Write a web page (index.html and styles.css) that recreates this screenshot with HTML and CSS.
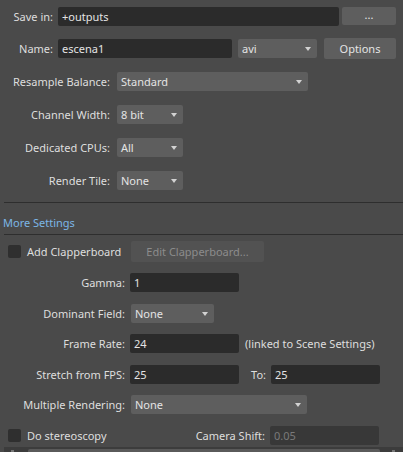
FILE: index.html
```html
<!DOCTYPE html>
<html>
<head>
<meta charset="utf-8">
<link rel="stylesheet" href="styles.css">
</head>
<body>
<div class="panel">
  <div class="top">
    <div class="row first">
      <span class="lbl lbl-s">Save in:</span>
      <div class="field w-save">+outputs</div>
      <div class="btn btn-dots">...</div>
    </div>
    <div class="row">
      <span class="lbl lbl-s">Name:</span>
      <div class="field w-name">escena1</div>
      <div class="combo w-avi">avi<span class="arrow"></span></div>
      <div class="btn btn-opt">Options</div>
    </div>
    <div class="row">
      <span class="lbl lbl-m">Resample Balance:</span>
      <div class="combo w-resample">Standard<span class="arrow"></span></div>
    </div>
    <div class="row">
      <span class="lbl lbl-m">Channel Width:</span>
      <div class="combo w-small">8 bit<span class="arrow"></span></div>
    </div>
    <div class="row">
      <span class="lbl lbl-m">Dedicated CPUs:</span>
      <div class="combo w-small">All<span class="arrow"></span></div>
    </div>
    <div class="row">
      <span class="lbl lbl-m">Render Tile:</span>
      <div class="combo w-small">None<span class="arrow"></span></div>
    </div>
  </div>
  <div class="sep sep-a"></div>
  <div class="section-title">More Settings</div>
  <div class="sep"></div>
  <div class="lower">
    <div class="row h31 check-row">
      <div class="check-group">
        <span class="check"></span><span class="check-lbl">Add Clapperboard</span>
      </div>
      <div class="btn btn-edit disabled">Edit Clapperboard...</div>
    </div>
    <div class="row h31">
      <span class="lbl lbl-l">Gamma:</span>
      <div class="field w-num">1</div>
    </div>
    <div class="row h30">
      <span class="lbl lbl-l">Dominant Field:</span>
      <div class="combo c-l w-dom">None<span class="arrow"></span></div>
    </div>
    <div class="row h31">
      <span class="lbl lbl-l">Frame Rate:</span>
      <div class="field w-num">24</div>
      <span class="note">(linked to Scene Settings)</span>
    </div>
    <div class="row h30">
      <span class="lbl lbl-l">Stretch from FPS:</span>
      <div class="field w-num">25</div>
      <span class="lbl lbl-to">To:</span>
      <div class="field w-num">25</div>
    </div>
    <div class="row h31">
      <span class="lbl lbl-l">Multiple Rendering:</span>
      <div class="combo c-l w-multi">None<span class="arrow"></span></div>
    </div>
    <div class="row stereo-row">
      <div class="check-group">
        <span class="check"></span><span class="check-lbl">Do stereoscopy</span>
      </div>
      <span class="lbl cam-lbl">Camera Shift:</span>
      <div class="field w-num field-dis">0.05</div>
    </div>
  </div>
  <div class="bottom-strip">
    <span class="tick tick-l"></span>
    <div class="bar"></div>
    <span class="tick tick-r"></span>
  </div>
</div>
</body>
</html>
```

FILE: styles.css
```css
html, body {
  margin: 0;
  padding: 0;
  background: #4a4a4a;
}
body {
  width: 403px;
  height: 452px;
  overflow: hidden;
  font-family: "Noto Sans", "Open Sans", sans-serif;
  font-size: 11px;
  color: #dedede;
}
.panel {
  display: flex;
  flex-direction: column;
}
.row {
  display: flex;
  align-items: center;
  height: 33px;
}
.row.first {
  height: 32px;
}
.lbl {
  flex: 0 0 auto;
  text-align: right;
  white-space: nowrap;
  box-sizing: border-box;
}
.lbl-s { width: 53px; margin-right: 5px; }
.lbl-m { width: 110px; margin-right: 7px; }
.lbl-l { width: 125px; margin-right: 5px; }
.lbl-to { width: 27px; margin-right: 5px; }
.field {
  box-sizing: border-box;
  height: 19px;
  line-height: 19px;
  background: #2b2b2b;
  border-radius: 2px;
  padding-left: 4px;
  color: #e4e4e4;
  white-space: nowrap;
}
.field-dis {
  background: #383838;
  color: #7a7a7a;
}
.combo {
  position: relative;
  box-sizing: border-box;
  height: 19px;
  line-height: 19px;
  background: #5e5e5e;
  border-radius: 2px;
  padding-left: 4px;
  color: #e4e4e4;
  white-space: nowrap;
}
.c-l { margin-left: 1px; }
.arrow {
  position: absolute;
  right: 6px;
  top: 8px;
  width: 0;
  height: 0;
  border-left: 3.5px solid transparent;
  border-right: 3.5px solid transparent;
  border-top: 4px solid #d2d2d2;
}
.btn {
  box-sizing: border-box;
  background: #5e5e5e;
  border-radius: 2px;
  text-align: center;
  color: #e4e4e4;
  white-space: nowrap;
}
.btn-dots {
  width: 54px;
  height: 18px;
  line-height: 16px;
  margin-left: 3px;
}
.btn-opt {
  width: 72px;
  height: 21px;
  line-height: 21px;
  margin-left: 7px;
}
.btn.disabled {
  background: #525252;
  color: #8c8c8c;
}
.w-save { width: 281px; }
.w-name { width: 174px; }
.w-avi { width: 79px; margin-left: 6px; }
.w-resample { width: 191px; }
.w-small { width: 66px; }
.w-num { width: 109px; }
.w-dom { width: 83px; }
.w-multi { width: 176px; }
.sep {
  height: 1px;
  background: #2e2e2e;
  margin-left: 4px;
}
.sep-a { margin-top: 5px; }
.section-title {
  height: 31px;
  box-sizing: border-box;
  padding-left: 3px;
  padding-top: 12px;
  color: #7cb6e6;
  line-height: 16px;
}
.lower {
  padding-top: 1px;
}
.h31 { height: 31px; }
.h30 { height: 30px; }
.check-group {
  display: flex;
  align-items: center;
  box-sizing: border-box;
  padding-left: 8px;
}
.check-row .check-group { width: 131px; }
.check {
  width: 13px;
  height: 13px;
  background: #2f2f2f;
  border-radius: 2px;
  margin-right: 6px;
  flex: 0 0 auto;
}
.btn-edit {
  width: 133px;
  height: 21px;
  line-height: 21px;
}
.note {
  margin-left: 6px;
  white-space: nowrap;
}
.stereo-row {
  height: 27px;
  box-sizing: border-box;
  padding-top: 4px;
  padding-right: 24px;
}
.cam-lbl {
  margin-left: auto;
  margin-right: 5px;
}
.bottom-strip {
  display: flex;
  align-items: flex-start;
  height: 6px;
  margin-left: 4px;
  background: #3c3c3c;
  box-sizing: border-box;
  padding-top: 2px;
}
.tick {
  width: 3px;
  height: 4px;
  background: #777;
  margin-top: 1px;
}
.tick-l { margin-left: 7px; }
.tick-r { margin-left: 12px; }
.bar {
  width: 352px;
  height: 5px;
  margin-left: 14px;
  background: #5a5a5a;
  border-radius: 2px 2px 0 0;
}
```
